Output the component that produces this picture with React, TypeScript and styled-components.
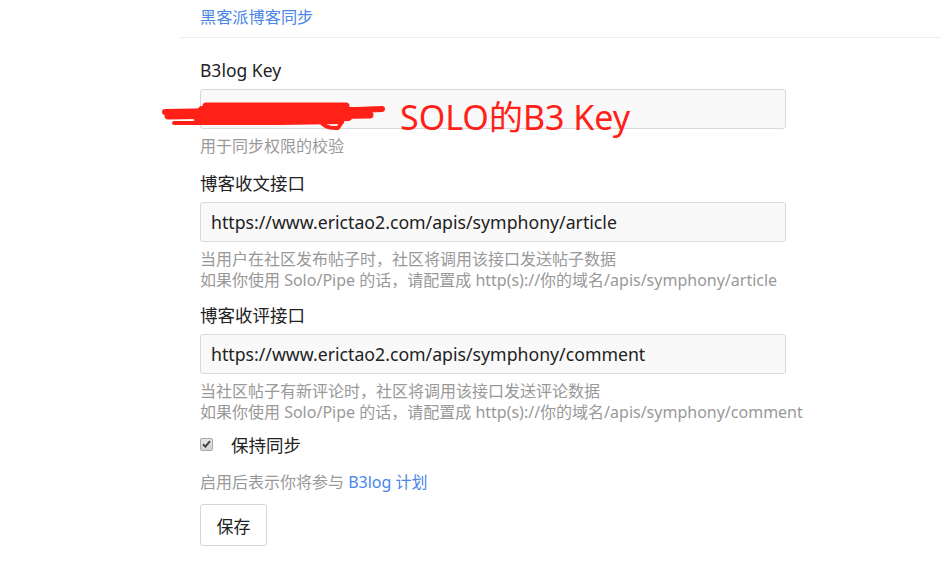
import React from "react";
import styled, { createGlobalStyle } from "styled-components";

const GlobalStyle = createGlobalStyle`
  html, body { margin: 0; padding: 0; background: #fff; }
  body {
    font-family: "Noto Sans", "Noto Sans CJK SC", sans-serif;
    color: #333;
  }
  * { box-sizing: border-box; }
`;

const Page = styled.div`
  width: 941px;
  height: 581px;
  padding-left: 180px;
  position: relative;
  overflow: hidden;
`;

const Header = styled.div`
  height: 38px;
  padding: 6px 20px 0;
  border-bottom: 1px solid #ececec;
`;

const HeaderLink = styled.a`
  font-size: 16.2px;
  line-height: 20px;
  color: #4a86e8;
  text-decoration: none;
`;

const Form = styled.div`
  padding: 20px 0 0 20px;
  width: 606px;
`;

const Field = styled.div<{ $gap: number }>`
  margin-bottom: ${(p) => p.$gap}px;
`;

const Label = styled.div`
  font-size: 17.5px;
  line-height: 24px;
  color: #222;
  margin-bottom: 7px;
`;

const InputWrap = styled.div`
  position: relative;
`;

const Input = styled.input`
  display: block;
  width: 586px;
  height: 40px;
  padding: 0 10px;
  border: 1px solid #d9d9d9;
  border-radius: 3px;
  background: #f9f9f9;
  font-family: "Noto Sans", "Noto Sans CJK SC", sans-serif;
  font-size: 17.7px;
  color: #222;
  outline: none;
`;

const Hint = styled.div<{ $top?: number }>`
  margin-top: ${(p) => p.$top ?? 7}px;
  font-size: 16px;
  line-height: 21px;
  color: #999;
  white-space: nowrap;
`;

const HintLink = styled.a`
  color: #4a86e8;
  text-decoration: none;
`;

const CheckRow = styled.label`
  display: flex;
  align-items: center;
  height: 24px;
  font-size: 17.5px;
  color: #222;
`;

const CheckBox = styled.span`
  width: 13px;
  height: 13px;
  border: 1px solid #a8a8a8;
  border-radius: 2px;
  background: linear-gradient(#e6e6e6, #d2d2d2);
  display: inline-flex;
  align-items: center;
  justify-content: center;
  margin-right: 18px;
`;

const SaveButton = styled.button`
  margin-top: 11px;
  width: 67px;
  height: 42px;
  border: 1px solid #d6d6d6;
  border-radius: 3px;
  background: #fff;
  font-family: "Noto Sans", "Noto Sans CJK SC", sans-serif;
  font-size: 17px;
  color: #222;
  padding: 0;
`;

const Scribble = styled.svg`
  position: absolute;
  left: -40px;
  top: 6px;
  pointer-events: none;
`;

const Annotation = styled.span`
  position: absolute;
  left: 200px;
  top: 7px;
  font-family: "Noto Sans", "Noto Sans CJK SC", sans-serif;
  font-size: 34px;
  line-height: 42px;
  color: #ff2118;
  white-space: nowrap;
  pointer-events: none;
`;

export default function App() {
  return (
    <>
      <GlobalStyle />
      <Page>
        <Header>
          <HeaderLink href="#">黑客派博客同步</HeaderLink>
        </Header>
        <Form>
          <Field $gap={14}>
            <Label>B3log Key</Label>
            <InputWrap>
              <Input defaultValue="" />
              <Scribble width="240" height="40" viewBox="0 0 240 40">
                <g stroke="#ff2118" strokeLinecap="round" strokeLinejoin="round" fill="none">
                  <path d="M46 11 L186 11" strokeWidth="7" />
                  <path d="M42 15 L192 16" strokeWidth="8" />
                  <path d="M5 17 L60 16 L120 18 L222 14" strokeWidth="6" />
                  <path d="M8 21 L70 20 L150 21 L210 20" strokeWidth="7" />
                  <path d="M38 24 L160 24 L188 22" strokeWidth="8" />
                  <path d="M14 28 L120 28 L182 27" strokeWidth="4" />
                  <path d="M160 25 Q164 34 178 33 L182 27" strokeWidth="4" />
                </g>
              </Scribble>
              <Annotation>SOLO的B3 Key</Annotation>
            </InputWrap>
            <Hint>用于同步权限的校验</Hint>
          </Field>
          <Field $gap={12}>
            <Label>博客收文接口</Label>
            <Input defaultValue="https://www.erictao2.com/apis/symphony/article" />
            <Hint>
              当用户在社区发布帖子时，社区将调用该接口发送帖子数据
              <br />
              如果你使用 Solo/Pipe 的话，请配置成 http(s)://你的域名/apis/symphony/article
            </Hint>
          </Field>
          <Field $gap={9}>
            <Label>博客收评接口</Label>
            <Input defaultValue="https://www.erictao2.com/apis/symphony/comment" />
            <Hint>
              当社区帖子有新评论时，社区将调用该接口发送评论数据
              <br />
              如果你使用 Solo/Pipe 的话，请配置成 http(s)://你的域名/apis/symphony/comment
            </Hint>
          </Field>
          <CheckRow>
            <CheckBox>
              <svg width="9" height="8" viewBox="0 0 9 8">
                <path d="M1 4.2 L3.4 6.6 L8 1.2" stroke="#444" strokeWidth="2" fill="none" />
              </svg>
            </CheckBox>
            保持同步
          </CheckRow>
          <Hint $top={16}>
            启用后表示你将参与 <HintLink href="#">B3log 计划</HintLink>
          </Hint>
          <SaveButton>保存</SaveButton>
        </Form>
      </Page>
    </>
  );
}
